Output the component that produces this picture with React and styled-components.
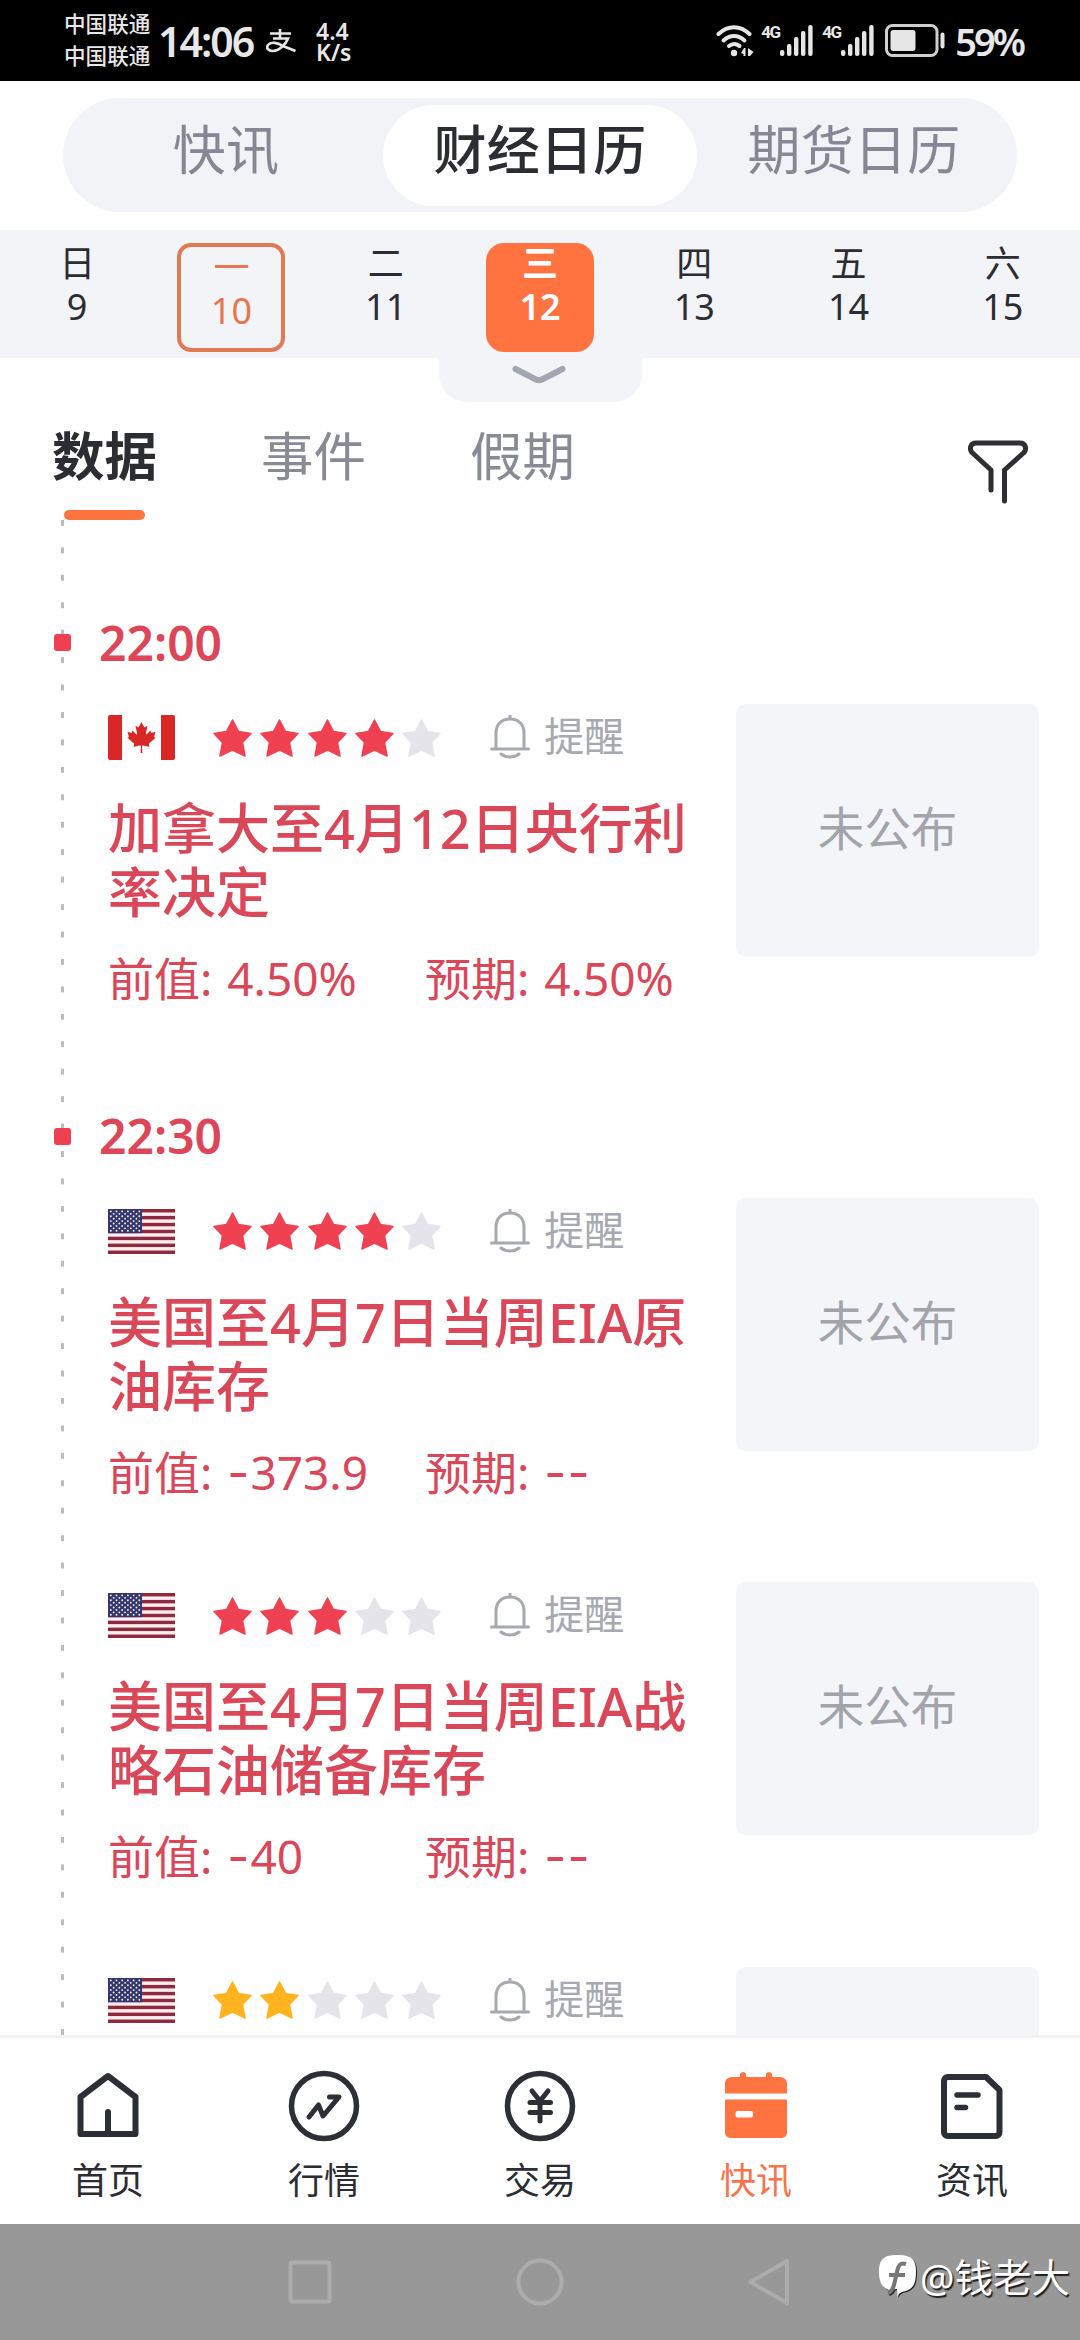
import React from 'react';
import styled, { createGlobalStyle } from 'styled-components';
import { FaCanadianMapleLeaf } from 'react-icons/fa';

const GlobalStyle = createGlobalStyle`
  * {
    box-sizing: border-box;
  }
  body {
    margin: 0;
    background: #fefefe;
    font-family: 'Noto Sans', 'Noto Sans CJK SC', sans-serif;
    color: #2b2d33;
  }
  svg {
    display: block;
  }
`;

const days = [
  { name: '日', date: '9' },
  { name: '一', date: '10', state: 'today' },
  { name: '二', date: '11' },
  { name: '三', date: '12', state: 'selected' },
  { name: '四', date: '13' },
  { name: '五', date: '14' },
  { name: '六', date: '15' },
];

const groups = [
  {
    time: '22:00',
    events: [
      {
        country: 'ca',
        stars: 4,
        title: '加拿大至4月12日央行利率决定',
        prev: '4.50%',
        expect: '4.50%',
      },
    ],
  },
  {
    time: '22:30',
    events: [
      {
        country: 'us',
        stars: 4,
        title: '美国至4月7日当周EIA原油库存',
        prev: '-373.9',
        expect: '--',
      },
      {
        country: 'us',
        stars: 3,
        title: '美国至4月7日当周EIA战略石油储备库存',
        prev: '-40',
        expect: '--',
      },
      { country: 'us', stars: 2 },
    ],
  },
];

const WifiIcon = () => (
  <svg width='38' height='32' viewBox='0 0 38 32' fill='none'>
    <g stroke='#e6e6e6' strokeWidth='4' strokeLinecap='round'>
      <path d='M2.5 9C12 0 24 0 33.5 9' />
      <path d='M7.5 15.5C14 9.5 22 9.5 28.5 15.5' />
      <path d='M13 21C16 18.5 20 18.5 23.5 21' />
    </g>
    <circle cx='18' cy='28' r='3.2' fill='#e6e6e6' />
    <path d='M29.5 23V31H27.5V29L25 28L28 23ZM32 31V23L37.5 27L34 31Z' fill='#e6e6e6' />
  </svg>
);

const SignalIcon = () => (
  <svg width='33' height='31' viewBox='0 0 33 31' fill='#e6e6e6'>
    <rect x='0' y='25' width='4.4' height='6' rx='2' />
    <rect x='7' y='19' width='4.4' height='12' rx='2' />
    <rect x='14' y='12' width='4.4' height='19' rx='2' />
    <rect x='21' y='6' width='4.4' height='25' rx='2' />
    <rect x='28.2' y='0' width='4.4' height='31' rx='2' />
  </svg>
);

const BatteryIcon = () => (
  <svg width='60' height='33' viewBox='0 0 60 33' fill='none'>
    <rect x='1.5' y='1.5' width='50.5' height='30' rx='6' stroke='#cfcfcf' strokeWidth='3' />
    <rect x='5.5' y='6' width='25' height='21' rx='3' fill='#e6e6e6' />
    <rect x='55.5' y='8.5' width='4' height='16' rx='2' fill='#e6e6e6' />
  </svg>
);

const PayIcon = () => (
  <svg width='30' height='24' viewBox='0 0 30 24' fill='none' stroke='#e6e6e6' strokeWidth='2.6'>
    <path d='M14 0V9M4 4.500H25M7 9.500H22C20 15 13 22 7 22C2 22 0 19 2 16C5 12 12 14 17 17L29.500 22' />
  </svg>
);

const FilterIcon = () => (
  <svg width='60' height='64' viewBox='0 0 60 64' fill='none'>
    <path
      d='M23 50V30L4 12.5C1 9 2.5 3 8 3H52C57.5 3 59 9 56 12.5L36.5 30V61'
      stroke='#2d2f33'
      strokeWidth='5'
      strokeLinecap='round'
      strokeLinejoin='round'
    />
  </svg>
);

const BellIcon = () => (
  <svg width='40' height='44' viewBox='0 0 40 44' fill='none'>
    <path
      d='M20 1V4M6 34V18C6 9 12 4 20 4C28 4 34 9 34 18V34M1.5 34H38.5M11 39C16 43 24 43 29 39'
      stroke='#a6a9b1'
      strokeWidth='3'
      strokeLinecap='round'
    />
  </svg>
);

const StarIcon = ({ color }) => (
  <svg width='39' height='38' viewBox='0 0 39 38'>
    <path
      d='M19.5 1L25.5 12.5L38 14.5L29.5 23.5L32 37L19.5 31L7 37L9.5 23.5L1 14.5L13.5 12.5Z'
      fill={color}
      stroke={color}
      strokeWidth='1.5'
      strokeLinejoin='round'
    />
  </svg>
);

const UsFlag = () => (
  <svg width='67' height='45' viewBox='0 0 67 45'>
    <rect width='67' height='45' fill='#fbeef0' />
    {[0, 1, 2, 3, 4, 5, 6].map((i) => (
      <rect key={i} y={i * 6.92} width='67' height='3.46' fill='#8f2a3e' />
    ))}
    <rect width='34' height='24.2' fill='#35366e' />
    {[0, 1, 2, 3, 4, 5, 6, 7, 8].map((row) =>
      (row % 2 ? [0, 1, 2, 3, 4] : [0, 1, 2, 3, 4, 5]).map((col) => (
        <circle
          key={`${row}-${col}`}
          cx={2.8 + col * 5.7 + (row % 2 ? 2.85 : 0)}
          cy={2.4 + row * 2.42}
          r='0.9'
          fill='#ffffff'
        />
      ))
    )}
  </svg>
);

const HomeIcon = () => (
  <svg width='72' height='72' viewBox='0 0 72 72' fill='none' stroke='#2d2f36' strokeWidth='6' strokeLinejoin='round'>
    <path d='M8.5 27L36 6L63.5 27V64H8.5Z' />
    <path d='M36 64V42' strokeLinecap='round' />
  </svg>
);

const MarketIcon = () => (
  <svg width='72' height='72' viewBox='0 0 72 72' fill='none' stroke='#2d2f36' strokeWidth='5.5' strokeLinecap='round' strokeLinejoin='round'>
    <circle cx='36' cy='36' r='32.5' />
    <path d='M21 47L30.5 35L35 46L51 27H41.5' strokeWidth='5' />
  </svg>
);

const TradeIcon = () => (
  <svg width='72' height='72' viewBox='0 0 72 72' fill='none' stroke='#2d2f36' strokeWidth='5.5' strokeLinecap='round' strokeLinejoin='round'>
    <circle cx='36' cy='36' r='32.5' />
    <path d='M28 21L36 31L44 21M26 32.5H46.5M26 42.5H46.5M36 31V51' strokeWidth='5' />
  </svg>
);

const CalendarIcon = () => (
  <svg width='72' height='72' viewBox='0 0 72 72' fill='#ff7341'>
    <path d='M20 4C20 1.5 26 1.5 26 4V7H46V4C46 1.5 52 1.5 52 4V7H60C64.5 7 67 10 67 14V23.5H5V14C5 10 7.5 7 12 7H20Z' />
    <path d='M5 29.5H67V62C67 65.5 65 68 61 68H11C7 68 5 65.5 5 62Z' />
    <rect x='15.500' y='41' width='17.5' height='6.5' rx='2' fill='#ffffff' />
  </svg>
);

const NewsIcon = () => (
  <svg width='72' height='72' viewBox='0 0 72 72' fill='none' stroke='#2d2f36' strokeWidth='6' strokeLinecap='round' strokeLinejoin='round'>
    <path d='M12 7H50L63.5 20V62C63.5 64.5 62 66 59.5 66H12C9.5 66 8 64.5 8 62V11C8 8.5 9.5 7 12 7Z' />
    <path d='M21 25H42M21 37.5H29.5' strokeWidth='5.5' />
  </svg>
);

const tabs = [
  { label: '首页', icon: <HomeIcon /> },
  { label: '行情', icon: <MarketIcon /> },
  { label: '交易', icon: <TradeIcon /> },
  { label: '快讯', icon: <CalendarIcon />, active: true },
  { label: '资讯', icon: <NewsIcon /> },
];

// the leading dashes are wider than the digits' own hyphen
const ValueText = ({ label, value }) => {
  const digits = value.replace(/^-+/, '');
  const dashes = value.slice(0, value.length - digits.length);
  return (
    <span>
      {label}: {dashes && <Dash>{dashes}</Dash>}
      {digits}
    </span>
  );
};

const EventRow = ({ country, stars, title, prev, expect }) => {
  const starColor = stars > 2 ? '#f04152' : '#ffb41f';
  return (
    <EventItem>
      <EventContent>
        <EventMeta>
          {country === 'us' ? (
            <UsFlag />
          ) : (
            <CaFlag>
              <FaCanadianMapleLeaf />
            </CaFlag>
          )}
          <StarList>
            {[1, 2, 3, 4, 5].map((n) => (
              <StarIcon key={n} color={n <= stars ? starColor : '#e4e4ea'} />
            ))}
          </StarList>
          <Remind>
            <BellIcon />
            <RemindText>提醒</RemindText>
          </Remind>
        </EventMeta>
        {title && (
          <>
            <EventTitle>{title}</EventTitle>
            <EventValues>
              <ValueText label='前值' value={prev} />
              <ValueText label='预期' value={expect} />
            </EventValues>
          </>
        )}
      </EventContent>
      <ResultCard>{title && '未公布'}</ResultCard>
    </EventItem>
  );
};

const App = () => {
  return (
    <Page>
      <GlobalStyle />
      <StatusBar>
        <Carrier>
          <span>中国联通</span>
          <span>中国联通</span>
        </Carrier>
        <Clock>14:06</Clock>
        <PayIcon />
        <NetSpeed>
          <span>4.4</span>
          <span>K/s</span>
        </NetSpeed>
        <StatusRight>
          <WifiIcon />
          <Signal>
            <SignalLabel>4G</SignalLabel>
            <SignalIcon />
          </Signal>
          <Signal>
            <SignalLabel>4G</SignalLabel>
            <SignalIcon />
          </Signal>
          <BatteryIcon />
          <BatteryText>59%</BatteryText>
        </StatusRight>
      </StatusBar>

      <SegmentWrap>
        <Segment>
          <SegmentItem $width='320px' $shift='6px'>
            快讯
          </SegmentItem>
          <SegmentItem $width='314px' $active>
            财经日历
          </SegmentItem>
          <SegmentItem $width='314px'>期货日历</SegmentItem>
        </Segment>
      </SegmentWrap>

      <WeekBar>
        {days.map((day) => (
          <DayCell key={day.date}>
            <DayBox $state={day.state}>
              <DayText>{day.name}</DayText>
              <DayText>{day.date}</DayText>
            </DayBox>
          </DayCell>
        ))}
      </WeekBar>
      <WeekHandle>
        <svg width='54' height='20' viewBox='0 0 54 20' fill='none'>
          <path d='M3.5 4L24 14.5Q27 16 30 14.5L50.5 4' stroke='#a2a5b2' strokeWidth='6' strokeLinecap='round' />
        </svg>
      </WeekHandle>

      <TabHeader>
        <TabItem $active>数据</TabItem>
        <TabItem>事件</TabItem>
        <TabItem>假期</TabItem>
        <FilterBtn>
          <FilterIcon />
        </FilterBtn>
      </TabHeader>

      <Timeline>
        {groups.map((group) => (
          <div key={group.time}>
            <GroupTime>
              <TimeDot />
              {group.time}
            </GroupTime>
            {group.events.map((event, i) => (
              <EventRow key={i} {...event} />
            ))}
          </div>
        ))}
      </Timeline>

      <BottomTabs>
        {tabs.map((tab) => (
          <BottomTab key={tab.label} $active={tab.active}>
            {tab.icon}
            <span>{tab.label}</span>
          </BottomTab>
        ))}
      </BottomTabs>

      <NavBar>
        <svg width='48' height='48' viewBox='0 0 48 48' fill='none' stroke='#acacac' strokeWidth='4'>
          <rect x='4.5' y='4.5' width='39' height='39' rx='2' />
        </svg>
        <svg width='48' height='48' viewBox='0 0 48 48' fill='none' stroke='#acacac' strokeWidth='4'>
          <circle cx='24' cy='24' r='21.5' />
        </svg>
        <svg width='48' height='48' viewBox='0 0 48 48' fill='none' stroke='#acacac' strokeWidth='4' strokeLinejoin='round'>
          <path d='M4.5 24L41 3V45Z' />
        </svg>
        <Watermark>
          <svg width='37' height='44' viewBox='0 0 37 44'>
            <path
              d='M18 0C31 0 37 3 37 16C37 28 35 33 27 36C22 37 20 38 18.5 42L18 34L10 35C3 33 0 27 0 17C0 4 5 0 18 0Z'
              fill='#ffffff'
            />
            <path d='M27 9C21 7 19 11 18 17L15 30C14 34 12 37 9 38M10 20H26' fill='none' stroke='#777777' strokeWidth='4' />
          </svg>
          <span>@钱老大</span>
        </Watermark>
      </NavBar>
    </Page>
  );
};

export default App;

const Page = styled.div`
  width: 1080px;
  height: 2340px;
  display: flex;
  flex-direction: column;
  overflow: hidden;
  background: #fefefe;
`;

const StatusBar = styled.div`
  height: 81px;
  flex-shrink: 0;
  display: flex;
  align-items: center;
  padding-left: 64px;
  padding-right: 57px;
  background: #000000;
  color: #e8e8e8;
`;

const Carrier = styled.div`
  width: 94px;
  display: flex;
  flex-direction: column;
  font-size: 21.6px;
  line-height: 32px;
  font-weight: 500;
  padding-bottom: 1px;
`;

const Clock = styled.div`
  width: 108px;
  font-size: 41px;
  line-height: 50px;
  font-weight: 600;
  letter-spacing: -2px;
  margin-top: 1px;
`;

const NetSpeed = styled.div`
  display: flex;
  flex-direction: column;
  margin-left: 20px;
  margin-top: 2px;
  font-size: 23px;
  line-height: 21px;
  font-weight: 600;
`;

const StatusRight = styled.div`
  display: flex;
  align-items: center;
  margin-left: auto;
`;

const Signal = styled.div`
  display: flex;
  align-items: flex-start;
  margin-left: 7px;
  & + & {
    margin-left: 9px;
  }
  & + svg {
    margin-left: 11px;
  }
`;

const SignalLabel = styled.span`
  width: 19px;
  font-family: 'Roboto', sans-serif;
  font-size: 17px;
  line-height: 14px;
  font-weight: 700;
  letter-spacing: -1.5px;
`;

const BatteryText = styled.span`
  margin-left: 10px;
  font-size: 38px;
  line-height: 46px;
  font-weight: 600;
  letter-spacing: -3px;
`;

const SegmentWrap = styled.div`
  height: 149px;
  flex-shrink: 0;
  padding: 17px 63px 0;
`;

const Segment = styled.div`
  height: 114px;
  display: flex;
  align-items: center;
  border-radius: 57px;
  background: #f2f3f7;
`;

const SegmentItem = styled.div`
  width: ${(props) => props.$width};
  height: 101px;
  padding-bottom: 10px;
  padding-left: ${(props) => props.$shift || 0};
  display: flex;
  align-items: center;
  justify-content: center;
  border-radius: 51px;
  background: ${(props) => (props.$active ? '#fefefe' : 'transparent')};
  color: ${(props) => (props.$active ? '#2b2d33' : '#858795')};
  font-size: 53px;
  line-height: 64px;
  letter-spacing: 0.3px;
  font-weight: ${(props) => (props.$active ? 500 : 400)};
`;

const WeekBar = styled.div`
  height: 128px;
  flex-shrink: 0;
  display: grid;
  grid-template-columns: repeat(7, 1fr);
  background: #f3f4f8;
`;

const DayCell = styled.div`
  display: flex;
  justify-content: center;
  padding-top: 13px;
`;

const DayBox = styled.div`
  width: 108px;
  height: 109px;
  display: flex;
  flex-direction: column;
  align-items: center;
  border-radius: 14px;
  ${(props) =>
    props.$state === 'today' &&
    `
    border: 4px solid #e07a55;
    color: #e8764e;
  `}
  ${(props) =>
    props.$state === 'selected' &&
    `
    border-radius: 18px;
    background: #ff7341;
    color: #ffffff;
    font-weight: 600;
  `}
`;

const DayText = styled.span`
  font-size: 36px;
  line-height: 44px;
  &:first-child {
    line-height: 42px;
  }
`;

const WeekHandle = styled.div`
  width: 203px;
  height: 44px;
  flex-shrink: 0;
  align-self: center;
  display: flex;
  justify-content: center;
  padding: 7px 3px 0 0;
  border-radius: 0 0 28px 28px;
  background: #f3f4f8;
`;

const TabHeader = styled.div`
  height: 118px;
  flex-shrink: 0;
  display: flex;
  padding: 20px 52px 0;
`;

const TabItem = styled.div`
  width: 209px;
  display: flex;
  flex-direction: column;
  font-size: 52.5px;
  line-height: 68px;
  font-weight: ${(props) => (props.$active ? 700 : 400)};
  color: ${(props) => (props.$active ? '#2b2d33' : '#888a95')};
  &::after {
    content: '';
    width: 81px;
    height: 10px;
    margin: 20px 0 0 12px;
    border-radius: 5px;
    background: ${(props) => (props.$active ? '#ff7341' : 'transparent')};
  }
`;

const FilterBtn = styled.div`
  margin-left: auto;
  padding-top: 18px;
`;

const Timeline = styled.div`
  height: 1515px;
  flex-shrink: 0;
  overflow: hidden;
  padding-top: 75px;
  background-image: linear-gradient(#bcbcbc 6px, transparent 6px);
  background-size: 3px 27.44px;
  background-position: 61px 0;
  background-repeat: repeat-y;
`;

const GroupTime = styled.div`
  height: 109px;
  display: flex;
  align-items: center;
  gap: 28px;
  padding: 0 0 14px 54px;
  font-size: 48px;
  line-height: 60px;
  font-weight: 600;
  color: #dc4658;
`;

const TimeDot = styled.div`
  width: 17px;
  height: 17px;
  border-radius: 3px;
  background: #ef4052;
`;

const EventItem = styled.div`
  height: 384.5px;
  display: flex;
  justify-content: space-between;
  padding: 0 41px 0 108px;
`;

const EventContent = styled.div`
  width: 600px;
  padding-top: 11px;
`;

const EventMeta = styled.div`
  height: 45px;
  display: flex;
  align-items: center;
`;

const CaFlag = styled.div`
  width: 67px;
  height: 45px;
  display: flex;
  align-items: center;
  justify-content: center;
  border: solid #d92726;
  border-width: 0 14px;
  border-radius: 2px;
  color: #d92726;
  font-size: 31px;
`;

const StarList = styled.div`
  display: flex;
  gap: 8.3px;
  margin-left: 38px;
`;

const Remind = styled.div`
  display: flex;
  align-items: center;
  gap: 14px;
  margin-left: 49px;
  padding-bottom: 1px;
`;

const RemindText = styled.span`
  padding-bottom: 3px;
  font-size: 40px;
  line-height: 45px;
  color: #a6a9b1;
`;

const EventTitle = styled.div`
  margin-top: 36px;
  font-size: 54px;
  line-height: 64px;
  font-weight: 500;
  color: #da4759;
`;

const EventValues = styled.div`
  display: grid;
  grid-template-columns: 317px 1fr;
  margin-top: 24px;
  font-size: 46px;
  line-height: 60px;
  word-spacing: 3px;
  color: #da4759;
`;

const Dash = styled.span`
  font-family: 'Inter', sans-serif;
  font-size: 48px;
  line-height: 1;
  letter-spacing: 1px;
`;

const ResultCard = styled.div`
  width: 303px;
  height: 253px;
  display: flex;
  align-items: center;
  justify-content: center;
  padding-bottom: 5px;
  border-radius: 10px;
  background: #f4f5f9;
  color: #a2a4ab;
  font-size: 46.5px;
  line-height: 60px;
`;

const BottomTabs = styled.div`
  height: 189px;
  flex-shrink: 0;
  display: grid;
  grid-template-columns: repeat(5, 1fr);
  border-top: 3px solid #f2f2f3;
`;

const BottomTab = styled.div`
  display: flex;
  flex-direction: column;
  align-items: center;
  padding-top: 32px;
  font-size: 36px;
  line-height: 44px;
  gap: 17px;
  color: ${(props) => (props.$active ? '#f8744a' : '#2b2d33')};
`;

const NavBar = styled.div`
  position: relative;
  height: 116px;
  flex-shrink: 0;
  display: flex;
  justify-content: center;
  align-items: center;
  gap: 182px;
  background: #989898;
`;

const Watermark = styled.div`
  position: absolute;
  right: 10px;
  top: 31px;
  display: flex;
  align-items: center;
  gap: 4px;
  font-size: 38.5px;
  line-height: 44px;
  color: #ffffff;
  text-shadow: 1.5px 1.5px 1px rgba(0, 0, 0, 0.8);
  svg {
    filter: drop-shadow(1.5px 1.5px 0.5px rgba(0, 0, 0, 0.8));
  }
`;
